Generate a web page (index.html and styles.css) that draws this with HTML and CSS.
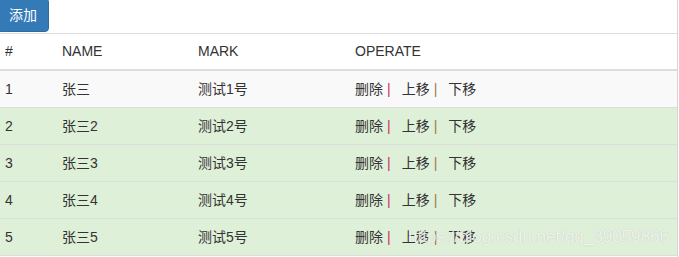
FILE: index.html
```html
<!DOCTYPE html>
<html>
<head>
<meta charset="utf-8">
<link rel="stylesheet" href="styles.css">
</head>
<body>
<div class="page">
  <button class="btn-add">添加</button>
  <table class="list">
    <colgroup>
      <col class="c-id"><col class="c-name"><col class="c-mark"><col>
    </colgroup>
    <thead>
      <tr><th>#</th><th>NAME</th><th>MARK</th><th>OPERATE</th></tr>
    </thead>
    <tbody>
      <tr class="striped"><td>1</td><td>张三</td><td>测试1号</td><td class="ops"><a>删除</a><span class="sep s1">|</span><a>上移</a><span class="sep s2">|</span><a>下移</a></td></tr>
      <tr class="success"><td>2</td><td>张三2</td><td>测试2号</td><td class="ops"><a>删除</a><span class="sep s1">|</span><a>上移</a><span class="sep s2">|</span><a>下移</a></td></tr>
      <tr class="success"><td>3</td><td>张三3</td><td>测试3号</td><td class="ops"><a>删除</a><span class="sep s1">|</span><a>上移</a><span class="sep s2">|</span><a>下移</a></td></tr>
      <tr class="success"><td>4</td><td>张三4</td><td>测试4号</td><td class="ops"><a>删除</a><span class="sep s1">|</span><a>上移</a><span class="sep s2">|</span><a>下移</a></td></tr>
      <tr class="success"><td>5</td><td>张三5</td><td>测试5号</td><td class="ops"><a>删除</a><span class="sep s1">|</span><a>上移</a><span class="sep s2">|</span><a>下移</a></td></tr>
    </tbody>
  </table>
  <div class="watermark">https://blog.csdn.net/qq_39059866</div>
</div>
</body>
</html>
```
FILE: styles.css
```css
html, body {
  margin: 0;
  padding: 0;
  background: #fff;
  overflow: hidden;
}
body {
  font-family: "Liberation Sans", Arial, "Noto Sans CJK SC", sans-serif;
  font-size: 14px;
  line-height: 20px;
  color: #333;
}
.page {
  position: relative;
  width: 680px;
  height: 262px;
  margin: -2px 0 0 -3px;
  border-right: 1px solid #d6d6d6;
}
.btn-add {
  display: block;
  height: 34px;
  margin: 0 0 1px 0;
  padding: 6px 11px;
  border: 1px solid #2e6da4;
  border-radius: 4px;
  background: #337ab7;
  color: #fff;
  font-family: "Liberation Sans", Arial, "Noto Sans CJK SC", sans-serif;
  font-size: 14px;
  line-height: 20px;
}
.list {
  width: 680px;
  border-collapse: collapse;
  border-spacing: 0;
  table-layout: fixed;
  border-top: 1px solid #ddd;
  border-bottom: 1px solid #ddd;
}
.c-id { width: 57px; }
.c-name { width: 136px; }
.c-mark { width: 157px; }
.list th, .list td {
  padding: 8px;
  text-align: left;
  font-weight: normal;
  line-height: 20px;
  white-space: nowrap;
}
.list th {
  padding-top: 7px;
  border-bottom: 2px solid #ddd;
  vertical-align: bottom;
}
.list td {
  border-top: 1px solid #ddd;
  vertical-align: top;
}
.striped td { background: #f9f9f9; }
.success td { background: #dff0d8; }
.ops a { color: #333; }
.sep {
  display: inline-block;
  margin: 0 11px 0 4px;
}
.s1 { color: #c8286e; }
.s2 { color: #a07848; }
.watermark {
  position: absolute;
  left: 411px;
  top: 229px;
  font-size: 17px;
  line-height: 20px;
  color: rgba(255, 255, 255, 0.8);
  text-shadow: 0 0 1px rgba(110, 110, 110, 0.4);
  white-space: nowrap;
}
```
